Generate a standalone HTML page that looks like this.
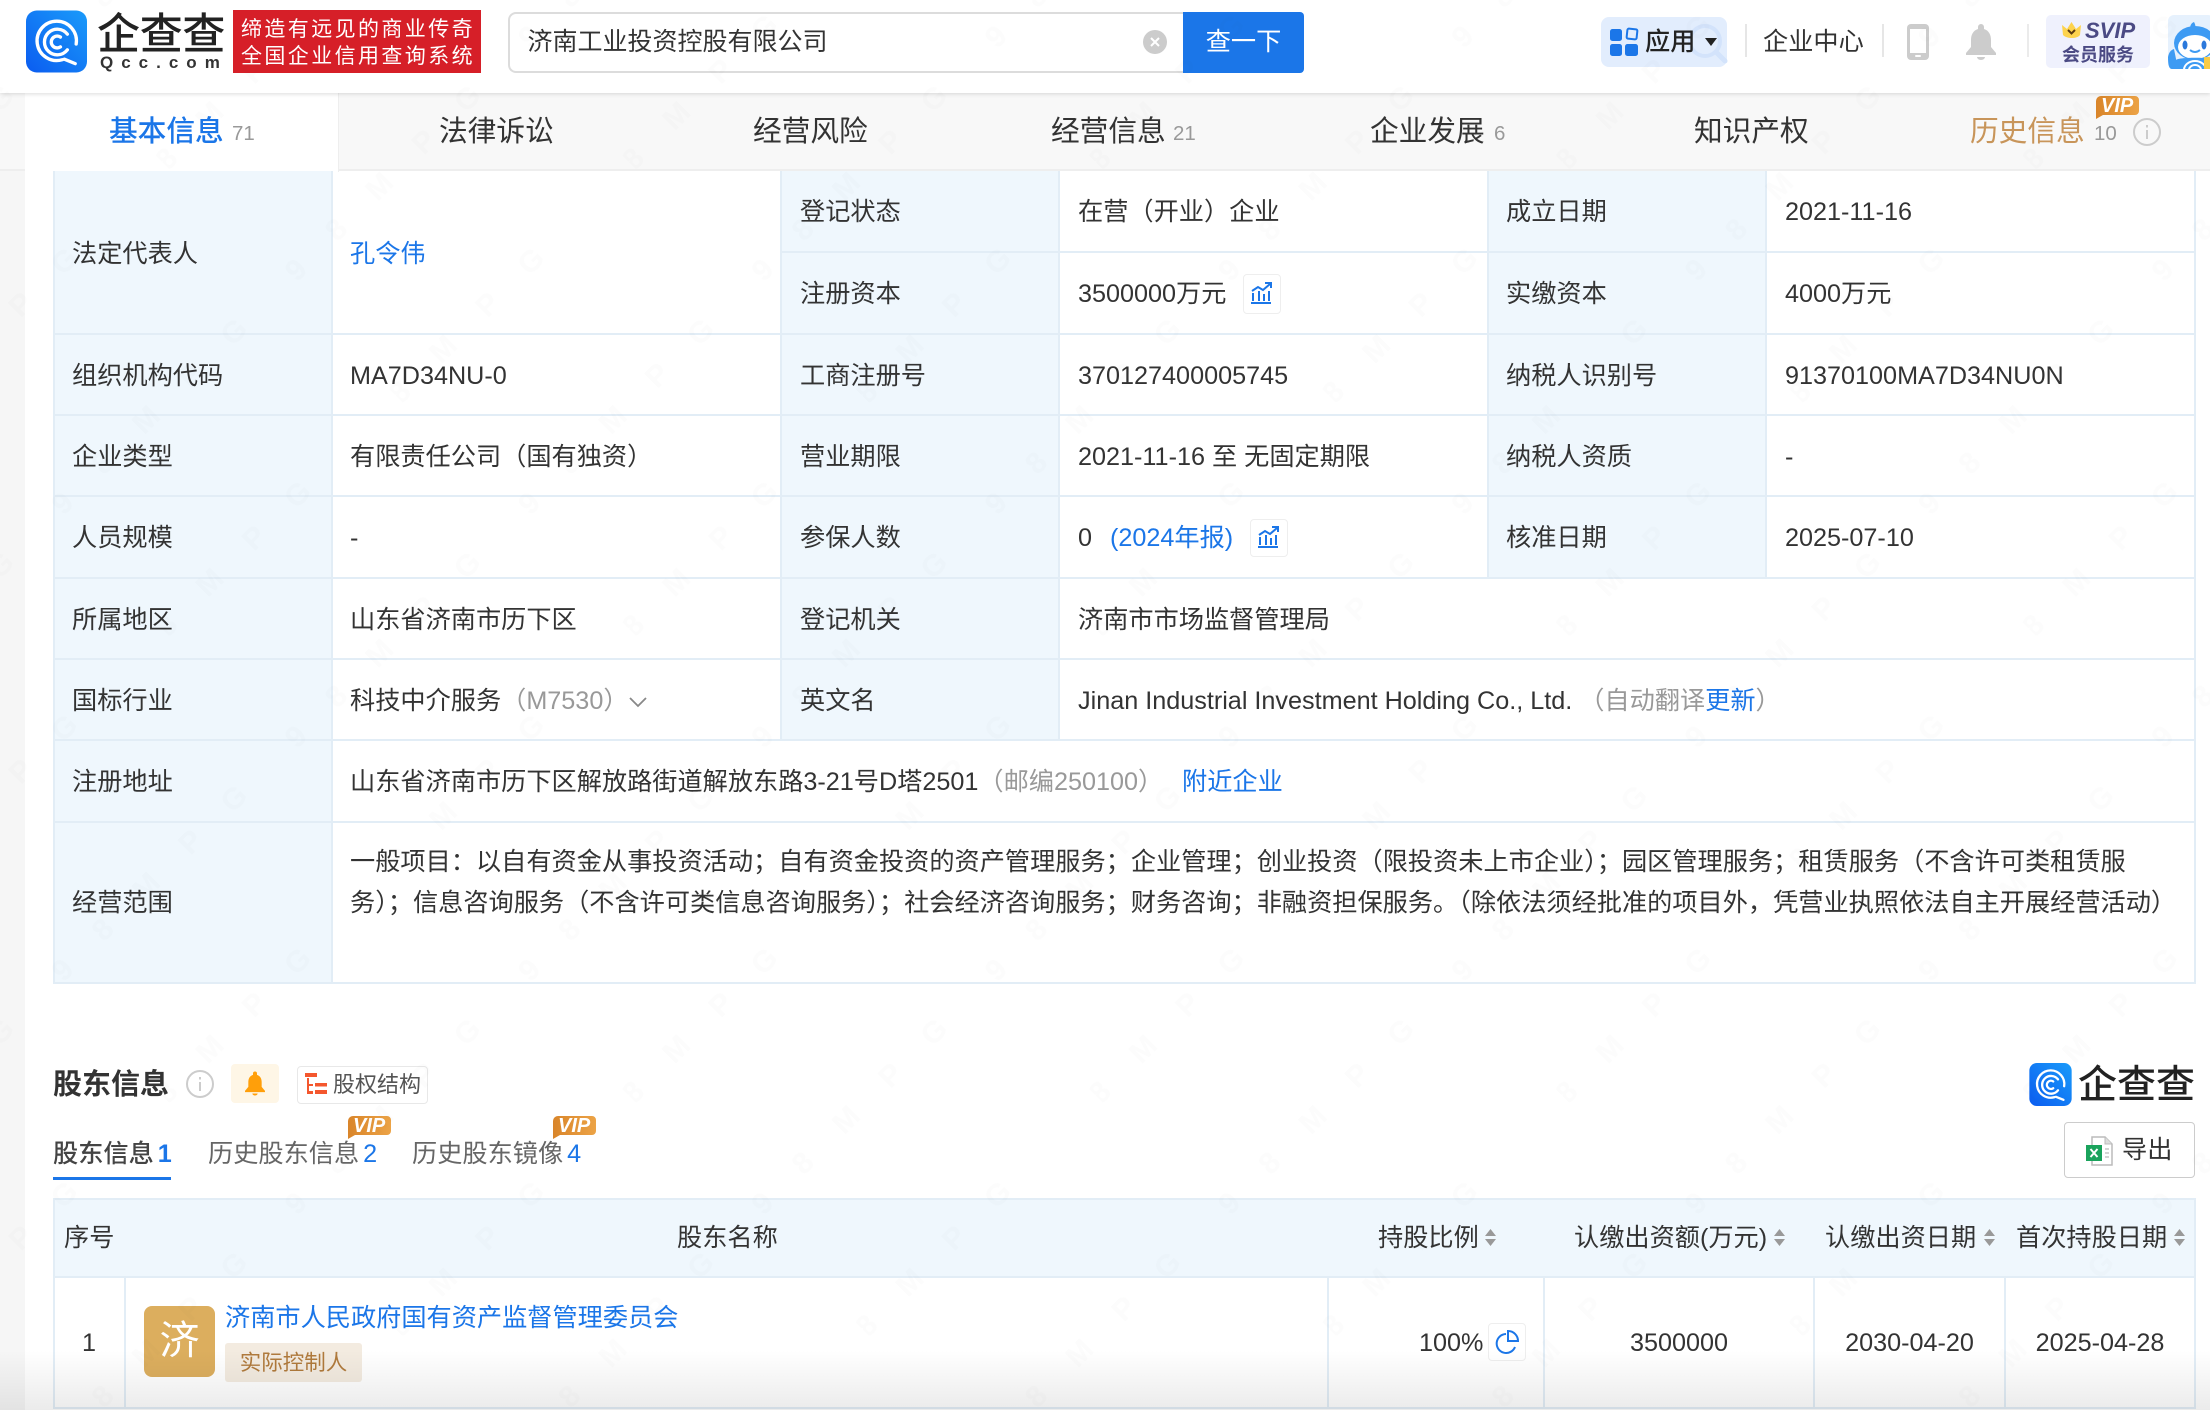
<!DOCTYPE html>
<html lang="zh-CN">
<head>
<meta charset="utf-8">
<title>济南工业投资控股有限公司</title>
<style>
html,body{margin:0;padding:0;width:2210px;height:1410px;overflow:hidden;background:#fff}
body{position:relative;font-family:"Liberation Sans","Noto Sans CJK SC",sans-serif;color:#333;font-size:25.2px}
.t{position:absolute;white-space:nowrap;line-height:30px;height:30px;margin-top:.8px}
.b{position:absolute}
.grey{color:#999}
.cnt{color:#999;font-size:20.500px}
.tab{font-size:28.700px;line-height:34px;height:34px;color:#333}
.blue,.tab.blue{color:#1b76e8}
.l{background:#eff7fd;position:absolute}
.h{position:absolute;height:2px;background:#e2edf6}
.v{position:absolute;width:2px;background:#e2edf6}
.ibox{position:absolute;border:1.5px solid #eee;border-radius:4px;box-sizing:border-box;background:#fff}
.vip{font-size:20px;font-weight:700;font-style:italic;color:#fff;line-height:20px;height:20px}
svg{position:absolute;display:block;overflow:visible}
</style>
</head>
<body>
<svg width="0" height="0" style="left:0;top:0"><defs>
<linearGradient id="vg" x1="0" y1="0" x2="1" y2="0"><stop offset="0" stop-color="#d9852a"/><stop offset="1" stop-color="#eca346"/></linearGradient>
</defs></svg>
<!-- page side background -->
<div class="b" style="left:0;top:0;width:25px;height:1410px;background:#f6f6f6"></div>

<!-- header -->
<div class="b" style="left:0;top:0;width:2210px;height:93px;background:#fff;box-shadow:0 1px 4px rgba(0,0,0,.14);z-index:2">
  <svg style="left:26px;top:10px" width="61" height="63" viewBox="0 0 62 63">
    <defs><linearGradient id="lg" x1="0" y1="1" x2="1" y2="0"><stop offset="0" stop-color="#0b5cf0"/><stop offset="1" stop-color="#1a9bfa"/></linearGradient></defs>
    <rect width="62" height="63" rx="11" fill="url(#lg)"/>
    <g fill="none" stroke="#fff" stroke-width="3.400" stroke-linecap="round">
      <path d="M37 50A20 20 0 1 1 51 34"/>
      <path d="M39 49.500L50 54"/>
      <path d="M42 24A13 13 0 1 0 42 40"/>
      <path d="M35 27A6 6 0 1 0 35 37"/>
    </g>
  </svg>
  <div class="t" style="left:97px;top:9.500px;height:50px;line-height:50px;font-size:43px;font-weight:500;color:#222;letter-spacing:-.3px">企查查</div>
  <div class="t" style="left:100px;top:51px;height:22px;line-height:22px;font-size:17px;font-weight:700;color:#333;letter-spacing:8px">Qcc.com</div>
  <div class="b" style="left:233px;top:10px;width:248px;height:63px;background:#d61f28"></div>
  <div class="t" style="left:241px;top:14px;color:#fff;font-size:21px;letter-spacing:2.400px">缔造有远见的商业传奇</div>
  <div class="t" style="left:241px;top:41px;color:#fff;font-size:21px;letter-spacing:2.400px">全国企业信用查询系统</div>

  <div class="b" style="left:508px;top:12px;width:677px;height:61px;border:2px solid #dcdcdc;border-right:0;border-radius:8px 0 0 8px;box-sizing:border-box;background:#fff"></div>
  <div class="t" style="left:527.500px;top:26.500px;font-size:25px">济南工业投资控股有限公司</div>
  <svg style="left:1143px;top:30px" width="24" height="24" viewBox="0 0 24 24"><circle cx="12" cy="12" r="12" fill="#ccc"/><path d="M8 8l8 8M16 8l-8 8" stroke="#fff" stroke-width="2"/></svg>
  <div class="b" style="left:1183px;top:12px;width:121px;height:61px;background:#1b76e8;border-radius:0 4px 4px 0;color:#fff;text-align:center;line-height:61px">查一下</div>

  <div class="b" style="left:1601px;top:17px;width:126px;height:50px;background:#e2edfd;border-radius:8px"></div>
  <svg style="left:1601px;top:17px" width="126" height="50" viewBox="0 0 126 50"><circle cx="104" cy="24" r="15" fill="none" stroke="#d3e3fb" stroke-width="4"/><path d="M115 35l9 9" stroke="#d3e3fb" stroke-width="5" stroke-linecap="round"/></svg>
  <svg style="left:1610px;top:28px" width="28" height="28" viewBox="0 0 28 28">
    <rect x="0" y="1" width="12" height="12" rx="2.500" fill="#1b76e8"/>
    <rect x="17" y="1" width="10" height="10" rx="1.500" fill="none" stroke="#1b76e8" stroke-width="2" transform="rotate(6 22 6)"/>
    <rect x="0" y="16" width="12" height="12" rx="2.500" fill="#1b76e8"/>
    <rect x="15" y="16" width="13" height="12" rx="2.500" fill="#1b76e8"/>
  </svg>
  <div class="t" style="left:1645px;top:26px;font-weight:500;color:#222">应用</div>
  <div class="b" style="left:1705px;top:38px;width:0;height:0;border:6.500px solid transparent;border-top:8px solid #222;border-bottom:0"></div>
  <div class="b" style="left:1745px;top:24px;width:2px;height:33px;background:#e6e6e6"></div>
  <div class="t" style="left:1763px;top:26px">企业中心</div>
  <div class="b" style="left:1882px;top:24px;width:2px;height:33px;background:#e6e6e6"></div>
  <svg style="left:1907px;top:24px" width="22" height="36" viewBox="0 0 22 36"><rect width="22" height="36" rx="4" fill="#ccc"/><rect x="3" y="5" width="16" height="24" fill="#fff"/><rect x="8" y="31" width="6" height="2" rx="1" fill="#fff"/></svg>
  <svg style="left:1966px;top:24px" width="30" height="36" viewBox="0 0 30 36" fill="#ccc"><path d="M15 0a3 3 0 0 1 3 3v2c5 1.500 7 6 7 11v7l5 6v2H0v-2l5-6v-7c0-5 2-9.500 7-11V3a3 3 0 0 1 3-3z"/><path d="M11 33h8a4 3 0 0 1-8 0z"/></svg>
  <div class="b" style="left:2027px;top:24px;width:2px;height:33px;background:#ebebeb"></div>

  <div class="b" style="left:2046px;top:15px;width:104px;height:53px;background:#eff1fd;border-radius:5px"></div>
  <svg style="left:2062px;top:22px" width="19" height="17" viewBox="0 0 19 17"><path d="M0 3l5 4 4.500-7 4.500 7 5-4-1 10c-3 4-13 4-17 0z" fill="#fdd34e"/><path d="M6 8l3.500 3.500L13 8" fill="none" stroke="#5b3a10" stroke-width="2"/></svg>
  <div class="t" style="left:2085px;top:15.500px;font-size:22px;font-weight:700;font-style:italic;color:#4b4a84">SVIP</div>
  <div class="t" style="left:2062px;top:39.500px;font-size:18px;font-weight:700;color:#4b4a84">会员服务</div>

  <svg style="left:2168px;top:15px;clip-path:inset(0 0 0 0)" width="42" height="54" viewBox="0 0 42 54">
    <rect width="46" height="54" rx="6" fill="#e6f1fd"/>
    <path d="M26 7c-3 1-4 4-4 7l5 0c1-3 0-5-1-7z" fill="#3e9bf3"/>
    <ellipse cx="27" cy="28" rx="21" ry="17" fill="#3e9bf3"/>
    <path d="M0 42c1-5 3-7 6-8l4 20H4C1 54 0 50 0 42z" fill="#3e9bf3"/>
    <ellipse cx="27" cy="32" rx="17" ry="12" fill="#fff"/>
    <path d="M8 45c2-3 36-3 38 0v9H8z" fill="#3e9bf3"/>
    <ellipse cx="17" cy="30" rx="2.500" ry="4.500" fill="#2b79dc"/>
    <ellipse cx="36" cy="30" rx="2.500" ry="4.500" fill="#2b79dc"/>
    <path d="M22 35q5 4 10 0" fill="none" stroke="#3e9bf3" stroke-width="2"/>
    <path d="M16 55a11 9 0 0 1 22 0" fill="none" stroke="#fff" stroke-width="2"/>
    <path d="M21 55a6 5 0 0 1 12 0" fill="none" stroke="#fff" stroke-width="2"/>
    <rect x="36" y="42" width="6" height="12" fill="#f8cb46"/>
  </svg>
</div>

<!-- tab bar -->
<div class="b" style="left:0;top:93px;width:2210px;height:78px;background:#f8f8f8;border-bottom:2px solid #eee;box-sizing:border-box"></div>
<div class="b" style="left:25px;top:93px;width:314px;height:79px;background:#fff;border-right:1px solid #eee;box-sizing:border-box"></div>
<div class="t tab blue" style="left:109px;top:114px;font-weight:500">基本信息</div>
<div class="t cnt" style="left:232px;top:118px">71</div>
<div class="t tab" style="left:439px;top:114px">法律诉讼</div>
<div class="t tab" style="left:753px;top:114px">经营风险</div>
<div class="t tab" style="left:1051px;top:114px">经营信息</div>
<div class="t cnt" style="left:1173px;top:118px">21</div>
<div class="t tab" style="left:1370px;top:114px">企业发展</div>
<div class="t cnt" style="left:1494px;top:118px">6</div>
<div class="t tab" style="left:1694px;top:114px">知识产权</div>
<div class="t tab" style="left:1970px;top:114px;color:#c8955a">历史信息</div>
<div class="t cnt" style="left:2094px;top:118px">10</div>
<svg style="left:2133px;top:118px" width="28" height="28" viewBox="0 0 28 28"><circle cx="14" cy="14" r="13" fill="none" stroke="#ccc" stroke-width="2"/><rect x="13" y="12" width="2" height="9" fill="#ccc"/><rect x="13" y="7" width="2" height="2.500" fill="#ccc"/></svg>
<svg style="left:2096px;top:96px" width="43" height="23" viewBox="0 0 43 23"><path d="M5 0h34a4 4 0 0 1 4 4v11a4 4 0 0 1-4 4H7L0 23V5a5 5 0 0 1 5-5z" fill="url(#vg)"/></svg>
<div class="t vip" style="left:2101px;top:95px">VIP</div>

<!-- info table backgrounds -->
<div class="l" style="left:53px;top:171px;width:278px;height:811px"></div>
<div class="l" style="left:781px;top:171px;width:278px;height:569px"></div>
<div class="l" style="left:1487px;top:171px;width:279px;height:407px"></div>
<!-- horizontal lines -->
<div class="h" style="left:781px;top:251px;width:1414px"></div>
<div class="h" style="left:53px;top:333px;width:2142px"></div>
<div class="h" style="left:53px;top:414px;width:2142px"></div>
<div class="h" style="left:53px;top:495px;width:2142px"></div>
<div class="h" style="left:53px;top:577px;width:2142px"></div>
<div class="h" style="left:53px;top:658px;width:2142px"></div>
<div class="h" style="left:53px;top:739px;width:2142px"></div>
<div class="h" style="left:53px;top:821px;width:2142px"></div>
<div class="h" style="left:53px;top:982px;width:2142px"></div>
<!-- vertical lines -->
<div class="v" style="left:53px;top:171px;height:813px"></div>
<div class="v" style="left:331px;top:171px;height:813px"></div>
<div class="v" style="left:780px;top:171px;height:569px"></div>
<div class="v" style="left:1058px;top:171px;height:569px"></div>
<div class="v" style="left:1487px;top:171px;height:407px"></div>
<div class="v" style="left:1765px;top:171px;height:407px"></div>
<div class="v" style="left:2194px;top:171px;height:813px"></div>

<!-- info table text -->
<div class="t" style="left:72px;top:238px">法定代表人</div>
<div class="t blue" style="left:350px;top:238px">孔令伟</div>
<div class="t" style="left:800px;top:196px">登记状态</div>
<div class="t" style="left:1078px;top:196px">在营（开业）企业</div>
<div class="t" style="left:1506px;top:196px">成立日期</div>
<div class="t" style="left:1785px;top:196px">2021-11-16</div>

<div class="t" style="left:800px;top:278px">注册资本</div>
<div class="t" style="left:1078px;top:278px">3500000万元</div>
<div class="ibox" style="left:1243px;top:274px;width:38px;height:40px"></div>
<svg style="left:1251px;top:282px" width="21" height="22" viewBox="0 0 21 22" fill="none" stroke="#1b76e8" stroke-width="2"><path d="M0 21h20M2 19v-8M8 19v-10M13 19v-7M18 19v-10"/><path d="M1 9l6-4 5 3 7-6M14 1h6v5" stroke-width="2"/></svg>
<div class="t" style="left:1506px;top:278px">实缴资本</div>
<div class="t" style="left:1785px;top:278px">4000万元</div>

<div class="t" style="left:72px;top:360px">组织机构代码</div>
<div class="t" style="left:350px;top:360px">MA7D34NU-0</div>
<div class="t" style="left:800px;top:360px">工商注册号</div>
<div class="t" style="left:1078px;top:360px">370127400005745</div>
<div class="t" style="left:1506px;top:360px">纳税人识别号</div>
<div class="t" style="left:1785px;top:360px">91370100MA7D34NU0N</div>

<div class="t" style="left:72px;top:441px">企业类型</div>
<div class="t" style="left:350px;top:441px">有限责任公司（国有独资）</div>
<div class="t" style="left:800px;top:441px">营业期限</div>
<div class="t" style="left:1078px;top:441px">2021-11-16 至 无固定期限</div>
<div class="t" style="left:1506px;top:441px">纳税人资质</div>
<div class="t" style="left:1785px;top:441px">-</div>

<div class="t" style="left:72px;top:522px">人员规模</div>
<div class="t" style="left:350px;top:522px">-</div>
<div class="t" style="left:800px;top:522px">参保人数</div>
<div class="t" style="left:1078px;top:522px">0</div>
<div class="t blue" style="left:1110px;top:522px">(2024年报)</div>
<div class="ibox" style="left:1250px;top:519px;width:38px;height:38px"></div>
<svg style="left:1258px;top:526px" width="21" height="22" viewBox="0 0 21 22" fill="none" stroke="#1b76e8" stroke-width="2"><path d="M0 21h20M2 19v-8M8 19v-10M13 19v-7M18 19v-10"/><path d="M1 9l6-4 5 3 7-6M14 1h6v5" stroke-width="2"/></svg>
<div class="t" style="left:1506px;top:522px">核准日期</div>
<div class="t" style="left:1785px;top:522px">2025-07-10</div>

<div class="t" style="left:72px;top:604px">所属地区</div>
<div class="t" style="left:350px;top:604px">山东省济南市历下区</div>
<div class="t" style="left:800px;top:604px">登记机关</div>
<div class="t" style="left:1078px;top:604px">济南市市场监督管理局</div>

<div class="t" style="left:72px;top:685px">国标行业</div>
<div class="t" style="left:350px;top:685px">科技中介服务<span class="grey">（M7530）</span></div>
<svg style="left:629px;top:697px" width="18" height="11" viewBox="0 0 18 11"><path d="M1 1l8 8 8-8" fill="none" stroke="#888" stroke-width="1.800"/></svg>
<div class="t" style="left:800px;top:685px">英文名</div>
<div class="t" style="left:1078px;top:685px">Jinan Industrial Investment Holding Co., Ltd. <span class="grey">（自动翻译</span><span class="blue">更新</span><span class="grey">）</span></div>

<div class="t" style="left:72px;top:766px">注册地址</div>
<div class="t" style="left:350px;top:766px">山东省济南市历下区解放路街道解放东路3-21号D塔2501<span class="grey">（邮编250100）</span></div>
<div class="t blue" style="left:1182px;top:766px">附近企业</div>

<div class="t" style="left:72px;top:887px">经营范围</div>
<div class="t" style="left:350px;top:846px">一般项目：以自有资金从事投资活动；自有资金投资的资产管理服务；企业管理；创业投资（限投资未上市企业）；园区管理服务；租赁服务（不含许可类租赁服</div>
<div class="t" style="left:350px;top:887px">务）；信息咨询服务（不含许可类信息咨询服务）；社会经济咨询服务；财务咨询；非融资担保服务。（除依法须经批准的项目外，凭营业执照依法自主开展经营活动）</div>

<!-- shareholder heading -->
<div class="t" style="left:53px;top:1067px;height:34px;line-height:34px;font-size:29px;font-weight:700;color:#333">股东信息</div>
<svg style="left:186px;top:1070px" width="28" height="28" viewBox="0 0 28 28"><circle cx="14" cy="14" r="13" fill="none" stroke="#ccc" stroke-width="2"/><rect x="13" y="12" width="2" height="9" fill="#ccc"/><rect x="13" y="7" width="2" height="2.500" fill="#ccc"/></svg>
<div class="b" style="left:231px;top:1064px;width:48px;height:39px;background:#fef6e6;border-radius:4px"></div>
<svg style="left:245px;top:1071px" width="20" height="25" viewBox="0 0 30 36" fill="#ff9f0a"><path d="M15 0a3 3 0 0 1 3 3v2c5 1.500 7 6 7 11v7l5 6v2H0v-2l5-6v-7c0-5 2-9.500 7-11V3a3 3 0 0 1 3-3z"/><path d="M11 33h8a4 3 0 0 1-8 0z"/></svg>
<div class="b" style="left:297px;top:1066px;width:131px;height:38px;border:1.500px solid #e8e8e8;border-radius:4px;box-sizing:border-box"></div>
<svg style="left:305px;top:1073px" width="23" height="22" viewBox="0 0 23 22" fill="#f4572e"><rect x="0" y="0" width="12" height="4"/><rect x="2" y="5" width="2" height="16"/><rect x="2" y="11" width="6" height="2"/><rect x="2" y="18" width="6" height="3"/><rect x="10" y="10" width="12" height="3.500"/><rect x="10" y="17" width="12" height="4"/></svg>
<div class="t" style="left:333px;top:1069px;font-size:22px;color:#555">股权结构</div>

<!-- right logo -->
<svg style="left:2029px;top:1063px" width="43" height="43" viewBox="0 0 62 63">
  <defs><linearGradient id="lg2" x1="0" y1="1" x2="1" y2="0"><stop offset="0" stop-color="#0b5cf0"/><stop offset="1" stop-color="#1a9bfa"/></linearGradient></defs>
  <rect width="62" height="63" rx="11" fill="url(#lg2)"/>
  <g fill="none" stroke="#fff" stroke-width="3.400" stroke-linecap="round">
    <path d="M37 50A20 20 0 1 1 51 34"/>
    <path d="M39 49.500L50 54"/>
    <path d="M42 24A13 13 0 1 0 42 40"/>
    <path d="M35 27A6 6 0 1 0 35 37"/>
  </g>
</svg>
<div class="t" style="left:2078px;top:1062px;height:46px;line-height:46px;font-size:39px;font-weight:500;color:#222">企查查</div>

<!-- sub tabs -->
<div class="t" style="left:53px;top:1138px;font-weight:500;color:#444">股东信息<span class="blue" style="margin-left:4px;font-weight:700">1</span></div>
<div class="b" style="left:53px;top:1177px;width:118px;height:3px;background:#1b76e8"></div>
<div class="t" style="left:208px;top:1138px;color:#666">历史股东信息<span class="blue" style="margin-left:4px">2</span></div>
<div class="t" style="left:412px;top:1138px;color:#666">历史股东镜像<span class="blue" style="margin-left:4px">4</span></div>
<svg style="left:348px;top:1116px" width="43" height="23" viewBox="0 0 43 23"><path d="M5 0h34a4 4 0 0 1 4 4v11a4 4 0 0 1-4 4H7L0 23V5a5 5 0 0 1 5-5z" fill="url(#vg)"/></svg>
<div class="t vip" style="left:353px;top:1115px">VIP</div>
<svg style="left:553px;top:1116px" width="43" height="23" viewBox="0 0 43 23"><path d="M5 0h34a4 4 0 0 1 4 4v11a4 4 0 0 1-4 4H7L0 23V5a5 5 0 0 1 5-5z" fill="url(#vg)"/></svg>
<div class="t vip" style="left:558px;top:1115px">VIP</div>

<!-- export -->
<div class="b" style="left:2064px;top:1122px;width:131px;height:56px;border:1.500px solid #ccc;border-radius:4px;box-sizing:border-box"></div>
<svg style="left:2086px;top:1136px" width="27" height="30" viewBox="0 0 27 30"><path d="M6 1h13l7 7v21H6z" fill="#fff" stroke="#bbb" stroke-width="1.500"/><path d="M19 1v7h7" fill="#ddd" stroke="#bbb" stroke-width="1"/><rect x="0" y="9" width="16" height="16" fill="#1aa35c"/><path d="M4.500 13l7 8M11.500 13l-7 8" stroke="#fff" stroke-width="2"/><path d="M19 13h4M19 17h4M19 21h4" stroke="#bbb" stroke-width="1.200"/></svg>
<div class="t" style="left:2122px;top:1134px">导出</div>

<!-- shareholder table -->
<div class="b" style="left:53px;top:1198px;width:2142px;height:79px;background:#eff7fd"></div>
<div class="h" style="left:53px;top:1198px;width:2142px"></div>
<div class="h" style="left:53px;top:1276px;width:2142px"></div>
<div class="h" style="left:53px;top:1407px;width:2142px"></div>
<div class="v" style="left:53px;top:1198px;height:211px"></div>
<div class="v" style="left:2194px;top:1198px;height:211px"></div>
<div class="v" style="left:124px;top:1277px;height:131px"></div>
<div class="v" style="left:1327px;top:1277px;height:131px"></div>
<div class="v" style="left:1543px;top:1277px;height:131px"></div>
<div class="v" style="left:1813px;top:1277px;height:131px"></div>
<div class="v" style="left:2004px;top:1277px;height:131px"></div>

<div class="t" style="left:64px;top:1222px">序号</div>
<div class="t" style="left:677px;top:1222px">股东名称</div>
<div class="t" style="left:1378px;top:1222px">持股比例</div>
<div class="t" style="left:1574px;top:1222px">认缴出资额(万元)</div>
<div class="t" style="left:1825px;top:1222px">认缴出资日期</div>
<div class="t" style="left:2016px;top:1222px">首次持股日期</div>
<svg style="left:1485px;top:1229px" width="11" height="17" viewBox="0 0 11 17" fill="#999"><path d="M5.500 0L11 7H0zM0 10h11L5.500 17z"/></svg>
<svg style="left:1774px;top:1229px" width="11" height="17" viewBox="0 0 11 17" fill="#999"><path d="M5.500 0L11 7H0zM0 10h11L5.500 17z"/></svg>
<svg style="left:1984px;top:1229px" width="11" height="17" viewBox="0 0 11 17" fill="#999"><path d="M5.500 0L11 7H0zM0 10h11L5.500 17z"/></svg>
<svg style="left:2174px;top:1229px" width="11" height="17" viewBox="0 0 11 17" fill="#999"><path d="M5.500 0L11 7H0zM0 10h11L5.500 17z"/></svg>

<div class="t" style="left:82px;top:1327px">1</div>
<div class="b" style="left:144px;top:1306px;width:71px;height:71px;background:#dcae5e;border-radius:8px;color:#fff;font-size:40px;line-height:70px;text-align:center">济</div>
<div class="t blue" style="left:225px;top:1302px">济南市人民政府国有资产监督管理委员会</div>
<div class="b" style="left:225px;top:1343px;width:137px;height:39px;background:#f3ebe0;border-radius:3px;color:#b07a3c;font-size:21.500px;line-height:41px;text-align:center">实际控制人</div>
<div class="t" style="left:1419px;top:1327px">100%</div>
<div class="ibox" style="left:1488px;top:1323px;width:38px;height:38px"></div>
<svg style="left:1497px;top:1330px" width="22" height="22" viewBox="0 0 22 22" fill="none" stroke="#1b76e8" stroke-width="2"><path d="M9 4A9.500 9.500 0 1 0 18 17"/><path d="M11 1A10 10 0 0 1 21 11H11z"/></svg>
<div class="t" style="left:1544px;top:1327px;width:270px;text-align:center">3500000</div>
<div class="t" style="left:1814px;top:1327px;width:191px;text-align:center">2030-04-20</div>
<div class="t" style="left:2005px;top:1327px;width:190px;text-align:center">2025-04-28</div>

<!-- watermark -->
<svg style="left:0;top:0;z-index:3;pointer-events:none" width="2210" height="1410">
  <defs><pattern id="wm" width="330" height="330" patternUnits="userSpaceOnUse" patternTransform="rotate(-45)">
    <text x="10" y="80" font-family="Liberation Sans" font-size="30" font-weight="700" fill="#000" fill-opacity=".01" letter-spacing="16">9 8 M P G</text>
    <text x="-60" y="240" font-family="Liberation Sans" font-size="30" font-weight="700" fill="#000" fill-opacity=".01" letter-spacing="16">9 8 M P G</text>
  </pattern></defs>
  <rect width="2210" height="1410" fill="url(#wm)"/>
</svg>
<!-- bottom fade -->
<div class="b" style="left:0;top:1350px;width:2210px;height:60px;background:linear-gradient(to bottom,rgba(0,0,0,0),rgba(0,0,0,.08));z-index:4"></div>
</body>
</html>
